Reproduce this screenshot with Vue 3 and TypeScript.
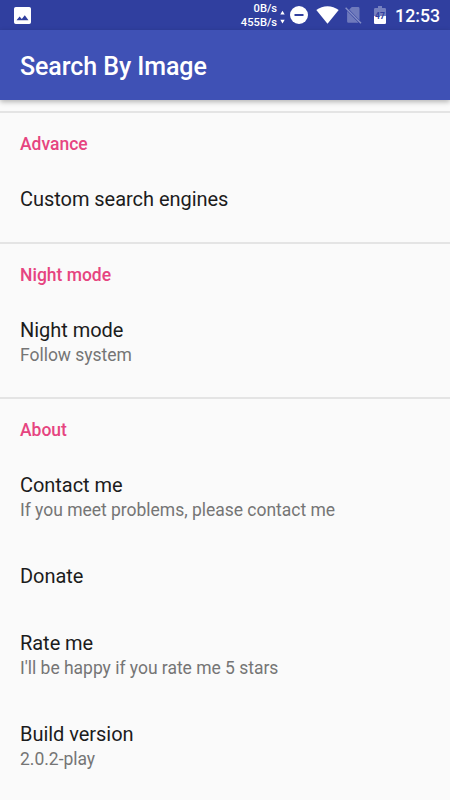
<script setup lang="ts">
interface Preference {
  title: string
  summary?: string
}

interface Category {
  name: string
  items: Preference[]
}

const categories: Category[] = [
  { name: 'Advance', items: [{ title: 'Custom search engines' }] },
  { name: 'Night mode', items: [{ title: 'Night mode', summary: 'Follow system' }] },
  {
    name: 'About',
    items: [
      { title: 'Contact me', summary: 'If you meet problems, please contact me' },
      { title: 'Donate' },
      { title: 'Rate me', summary: "I'll be happy if you rate me 5 stars" },
      { title: 'Build version', summary: '2.0.2-play' },
    ],
  },
]
</script>

<template>
  <div class="screen">
    <div class="status-bar">
      <svg class="picture" width="17" height="17" viewBox="0 0 17 17">
        <path
          fill="#fff"
          fill-rule="evenodd"
          d="M1.8 0h13.4Q17 0 17 1.8v13.4Q17 17 15.2 17H1.8Q0 17 0 15.2V1.8Q0 0 1.8 0ZM2.5 13.3h12L10.8 8.2 7.8 12 5.6 9.5Z"
        />
      </svg>
      <div class="network">
        <div class="speeds">
          <span>0B/s</span>
          <span>455B/s</span>
        </div>
        <svg class="arrows" width="5" height="16" viewBox="0 0 5 16">
          <path fill="#fff" d="M.3 5.4 2.5 1.8 4.7 5.4ZM.3 10.8h4.4L2.5 14.4Z" />
        </svg>
      </div>
      <svg class="dnd" width="18" height="18" viewBox="0 0 18 18">
        <circle cx="9" cy="9" r="9" fill="#fff" />
        <rect x="4.5" y="8" width="9" height="2" fill="#303f9f" />
      </svg>
      <svg class="wifi" width="23" height="18" viewBox="0 0 23 18">
        <path fill="#fff" d="M.3 4.1C6.8-1 16.2-1 22.7 4.1L11.5 17.8Z" />
      </svg>
      <svg class="no-sim" width="17" height="18" viewBox="0 0 17 18">
        <path fill="#6f7abc" d="M6.8 1h6.3q1.4 0 1.4 1.4v11.8L4.2 3.6ZM2.1 5.1 13.6 16.8H3.5q-1.4 0-1.4-1.4Z" />
        <path stroke="#8790c8" stroke-width="1.4" d="M.6 1.8 16 17.3" />
      </svg>
      <svg class="battery" width="12" height="18" viewBox="0 0 12 18">
        <path fill="#7580bf" d="M4 0h4v2h2.7Q12 2 12 3.3V10H0V3.3Q0 2 1.3 2H4Z" />
        <path fill="#fff" d="M0 10h12v6.7Q12 18 10.7 18H1.3Q0 18 0 16.7Z" />
        <text x="6" y="12.8" text-anchor="middle" class="level">47</text>
      </svg>
      <span class="clock">12:53</span>
    </div>
    <header class="toolbar">
      <h1>Search By Image</h1>
    </header>
    <main class="preferences">
      <section v-for="category in categories" :key="category.name" class="category">
        <h2>{{ category.name }}</h2>
        <div v-for="item in category.items" :key="item.title" class="item">
          <div class="title">{{ item.title }}</div>
          <div v-if="item.summary" class="summary">{{ item.summary }}</div>
        </div>
      </section>
    </main>
  </div>
</template>

<style>
body {
  margin: 0;
  background: #fafafa;
}
</style>

<style scoped>
.screen {
  height: 800px;
  display: flex;
  flex-direction: column;
  overflow: hidden;
  background: #fafafa;
  font-family: Roboto, "Liberation Sans", sans-serif;
}

.status-bar {
  flex: none;
  box-sizing: border-box;
  height: 30px;
  padding: 0 10px 0 14px;
  display: flex;
  align-items: center;
  background: #303f9f;
  color: #fff;
}

.status-bar svg {
  flex: none;
  display: block;
}

.network {
  display: flex;
  align-items: center;
  gap: 3px;
  margin: 2px 5px 0 auto;
}

.speeds {
  display: flex;
  flex-direction: column;
  align-items: flex-end;
  font-size: 11.2px;
  font-weight: 500;
  line-height: 14px;
}

.network .arrows {
  margin-top: 2px;
}

.wifi {
  margin: 0 6px 0 8px;
}

.battery {
  margin: 0 9px 0 12px;
}

.level {
  font-size: 8.5px;
  font-weight: 700;
  fill: #303f9f;
}

.clock {
  font-size: 17.7px;
  font-weight: 500;
  line-height: 30px;
  margin-top: 1px;
}

.toolbar {
  flex: none;
  position: relative;
  height: 70px;
  padding: 0 20px;
  display: flex;
  align-items: center;
  background: #3f51b5;
  color: #fff;
  box-shadow: 0 2px 5px rgba(0, 0, 0, 0.28);
}

h1 {
  margin: 3px 0 0;
  font-size: 25px;
  font-weight: 500;
  line-height: 30px;
  letter-spacing: -0.08px;
}

.preferences {
  padding-top: 11px;
}

.category {
  padding-bottom: 9px;
  border-top: 2px solid #e4e4e4;
}

h2 {
  margin: 0;
  padding: 21px 20px 12px;
  font-size: 17.5px;
  font-weight: 500;
  line-height: 20px;
  color: #e64480;
}

.item {
  padding: 20px;
}

.title {
  font-size: 20px;
  line-height: 27px;
  letter-spacing: -0.04px;
  color: #1c1c1c;
}

.summary {
  padding-bottom: 2px;
  font-size: 17.5px;
  line-height: 22px;
  letter-spacing: -0.02px;
  color: #757575;
}
</style>
